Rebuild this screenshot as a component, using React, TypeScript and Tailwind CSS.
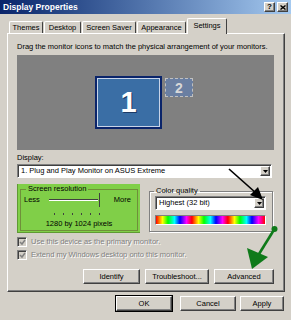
import React from "react";

const raised =
  "bg-[#d4d0c8] border border-t-white border-l-white border-r-[#404040] border-b-[#404040] shadow-[inset_-1px_-1px_0_#808080]";
const sunken =
  "border border-t-[#808080] border-l-[#808080] border-r-white border-b-white shadow-[inset_1px_1px_0_#404040]";

const Button = ({ label, className, isDefault }: { label: string; className: string; isDefault?: boolean }) => (
  <div
    className={`${className} flex items-center justify-center ${
      isDefault ? "outline outline-1 outline-black" : ""
    } ${raised}`}
  >
    <span className="leading-none">{label}</span>
  </div>
);

const ComboArrow = () => (
  <div className={`w-[10px] h-[10px] flex items-center justify-center ${raised}`}>
    <svg width="5" height="3" viewBox="0 0 5 3">
      <polygon points="0,0 5,0 2.5,3" fill="#000" />
    </svg>
  </div>
);

const Check = ({ label }: { label: string }) => (
  <div className="flex items-center gap-[4px] h-[10px]">
    <div className={`w-[10px] h-[10px] bg-[#d4d0c8] flex items-center justify-center ${sunken}`}>
      <svg width="7" height="7" viewBox="0 0 7 7">
        <polyline points="1,3 3,5 6,1" fill="none" stroke="#808080" strokeWidth="1.5" />
      </svg>
    </div>
    <span className="text-[#808080] [text-shadow:1px_1px_0_#fff] leading-none">{label}</span>
  </div>
);

const tabs = ["Themes", "Desktop", "Screen Saver", "Appearance"];
const tabW = ["w-[34px]", "w-[37px]", "w-[54px]", "w-[49px]"];

export default function App() {
  return (
    <div className="relative w-[291px] h-[320px] overflow-hidden bg-[#d4d0c8] font-['Liberation_Sans',Arial,sans-serif] text-[7.5px] text-black">
      {/* title bar */}
      <div className="h-[14px] flex items-center pl-[3px] pr-[3px] bg-gradient-to-r from-[#0a246a] to-[#a6caf0]">
        <span className="text-white font-bold text-[8.5px] leading-none">Display Properties</span>
        <div className="ml-auto flex gap-[2px]">
          <div className={`w-[11px] h-[10px] flex items-center justify-center ${raised}`}>
            <span className="font-bold text-[8px] leading-none">?</span>
          </div>
          <div className={`w-[11px] h-[10px] flex items-center justify-center ${raised}`}>
            <svg width="6" height="5" viewBox="0 0 6 5">
              <path d="M0.5 0.5 L5.5 4.5 M5.5 0.5 L0.5 4.5" stroke="#000" strokeWidth="1.4" />
            </svg>
          </div>
        </div>
      </div>

      {/* tabs */}
      <div className="h-[19px] flex items-end pl-[9px] gap-[1px] relative z-10">
        {tabs.map((t, i) => (
          <div
            key={t}
            className={`${tabW[i]} h-[12px] flex items-center justify-center border border-b-0 border-t-white border-l-white border-r-[#404040] rounded-t-[2px]`}
          >
            <span className="leading-none">{t}</span>
          </div>
        ))}
        <div className="w-[40px] h-[16px] -mb-[1px] flex items-center justify-center bg-[#d4d0c8] border border-b-0 border-t-white border-l-white border-r-[#404040] rounded-t-[2px]">
          <span className="leading-none -mt-[2px]">Settings</span>
        </div>
      </div>

      {/* panel */}
      <div className={`ml-[7px] w-[278px] h-[259px] ${raised} pl-[9px]`}>
        <div className="pt-[8px] leading-[9px]">
          Drag the monitor icons to match the physical arrangement of your monitors.
        </div>
        <div className="relative mt-[4px] w-[257px] h-[95px] bg-[#808080]">
          <div className="absolute left-[78px] top-[21px] w-[67px] h-[53px] border-2 border-[#0a246a] bg-[#0a246a]">
            <div className="w-full h-full border border-[#c8d4e8] bg-[#3a6ea5] flex items-center justify-center">
              <span className="text-white font-bold text-[29px] leading-none [text-shadow:1px_1px_0_#1c3a66]">1</span>
            </div>
          </div>
          <div className="absolute left-[148px] top-[23px] w-[28px] h-[19px] border border-dashed border-[#c0c0c0] bg-[#6a7fa2] flex items-center justify-center">
            <span className="text-[#d8d8d8] font-bold text-[14px] leading-none">2</span>
          </div>
        </div>

        <div className="mt-[3px] leading-[9px]">Display:</div>
        <div className={`mt-[2px] w-[255px] h-[14px] bg-white flex items-center pl-[3px] pr-[1px] ${sunken}`}>
          <span className="leading-none">1. Plug and Play Monitor on ASUS Extreme</span>
          <div className="ml-auto">
            <ComboArrow />
          </div>
        </div>

        <div className="mt-[6px] flex gap-[9px] h-[49px]">
          {/* screen resolution */}
          <div className="w-[123px] h-full bg-[#80cf48] border-l border-b border-[#5f9a33] px-[2px] pt-[1px]">
            <fieldset className="h-[46px] border border-[#6f8f3a] px-[3px]">
              <legend className="px-[2px] ml-[2px] leading-[8px]">Screen resolution</legend>
              <div className="flex items-start h-[20px]">
                <span className="leading-none mt-[3px]">Less</span>
                <div className="ml-[9px] w-[52px] flex flex-col">
                  <div className="relative h-[17px]">
                    <div className="absolute left-0 right-[3px] top-[6px] h-[2px] border-t border-[#404040] border-b border-b-white" />
                    <div className="absolute right-[1px] top-0 w-[2px] h-[14px] border-r border-[#404040]" />
                  </div>
                </div>
                <span className="leading-none mt-[3px] ml-[13px]">More</span>
              </div>
              <div className="flex gap-[8px] ml-[30px] h-[4px]">
                {[0, 1, 2, 3, 4, 5].map((i) => (
                  <div key={i} className="w-[1px] h-[2px] bg-[#404040]" />
                ))}
              </div>
              <div className="text-center leading-none mt-[3px]">1280 by 1024 pixels</div>
            </fieldset>
          </div>

          {/* color quality */}
          <fieldset className="w-[124px] h-[45px] mt-[3px] border border-[#808080] shadow-[inset_1px_1px_0_#fff,1px_1px_0_#fff] px-[5px]">
            <legend className="px-[2px] -ml-[1px] leading-[8px]">Color quality</legend>
            <div className={`mt-[1px] w-[111px] h-[14px] bg-white flex items-center pl-[3px] pr-[1px] ${sunken}`}>
              <span className="leading-none">Highest (32 bit)</span>
              <div className="ml-auto">
                <ComboArrow />
              </div>
            </div>
            <div className={`mt-[5px] w-[111px] h-[10px] ${sunken}`}>
              <div className="w-full h-full bg-[linear-gradient(to_right,#f00,#ff0_6%,#0f0_11%,#0ff_17%,#00f_22%,#f0f_28%,#f00_33%,#ff0_39%,#0f0_44%,#0ff_50%,#00f_55%,#f0f_61%,#f00_66%,#ff0_72%,#0f0_77%,#0ff_83%,#00f_88%,#f0f_94%,#f00)]" />
            </div>
          </fieldset>
        </div>

        <div className="mt-[4px] flex flex-col gap-[3px]">
          <Check label="Use this device as the primary monitor." />
          <Check label="Extend my Windows desktop onto this monitor." />
        </div>

        <div className="mt-[9px] flex justify-end gap-[5px] pr-[10px]">
          <Button label="Identify" className="w-[57px] h-[15px]" />
          <Button label="Troubleshoot..." className="w-[64px] h-[15px]" />
          <Button label="Advanced" className="w-[60px] h-[15px]" />
        </div>
      </div>

      {/* dialog buttons */}
      <div className="mt-[4px] flex justify-end pr-[7px]">
        <Button label="OK" className="w-[56px] h-[15px]" isDefault />
        <Button label="Cancel" className="ml-[8px] w-[56px] h-[15px]" />
        <Button label="Apply" className="ml-[4px] w-[44px] h-[15px]" />
      </div>

      {/* annotation arrows */}
      <svg className="absolute inset-0 pointer-events-none" width="291" height="320" viewBox="0 0 291 320">
        <line x1="229" y1="169" x2="256" y2="193" stroke="#000" strokeWidth="1.6" />
        <polygon points="263,200 250,195 258,187" fill="#000" />
        <circle cx="274.5" cy="229" r="3" fill="#0f7a1a" />
        <line x1="274.5" y1="229" x2="259" y2="254" stroke="#0f7a1a" strokeWidth="2.6" />
        <polygon points="252,269 247,248 268,257" fill="#0f7a1a" />
      </svg>
    </div>
  );
}
